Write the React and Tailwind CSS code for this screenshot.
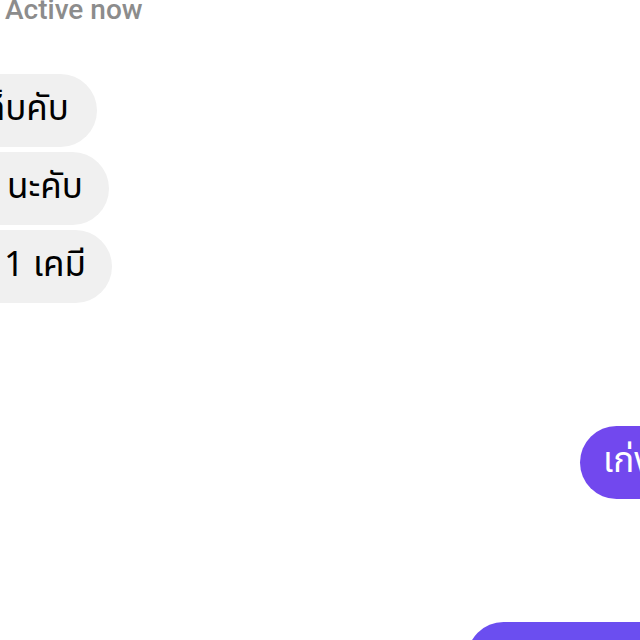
export default function App() {
  const thai = { fontFamily: '"Noto Sans Thai", "Noto Sans", "DejaVu Sans", sans-serif' };

  return (
    <div className="w-[640px] h-[640px] overflow-hidden bg-white">
      {/* Header */}
      <div className="-mt-[10px] pl-[5px] h-[40px] text-[28px] font-medium text-[#8c8c8c] font-['Roboto',sans-serif] leading-[40px]">
        Active now
      </div>

      {/* Incoming */}
      <div className="mt-[44px] -ml-[220px] flex flex-col items-start gap-[5px]" style={thai}>
        <div className="w-[317px] h-[73px] rounded-full bg-[#f0f0f0] flex items-center justify-end pr-[28px] text-[35px] text-black whitespace-nowrap">
          ได้เลยเดี๋ยวเก็บคับ
        </div>
        <div className="w-[329px] h-[73px] rounded-full bg-[#f0f0f0] flex items-center justify-end pr-[26px] text-[35px] text-black whitespace-nowrap">
          ขอบคุณมาก{'\u00a0\u00a0'}นะคับ
        </div>
        <div className="w-[332px] h-[73px] rounded-full bg-[#f0f0f0] flex items-center justify-end pr-[26px] text-[35px] text-black whitespace-nowrap">
          อยู่ชั้นปี{'\u00a0\u00a0'}1 เคมี
        </div>
      </div>

      {/* Outgoing */}
      <div className="mt-[123px] flex flex-col items-start" style={thai}>
        <div className="ml-[580px] w-[300px] h-[73px] rounded-l-full bg-[#7248ee] flex items-center pl-[23px] text-[35px] text-white whitespace-nowrap">
          เก่งมากเลย
        </div>
        <div className="mt-[123px] ml-[467px] w-[400px] h-[73px] rounded-l-full bg-[#6b4ef0]"></div>
      </div>
    </div>
  );
}
